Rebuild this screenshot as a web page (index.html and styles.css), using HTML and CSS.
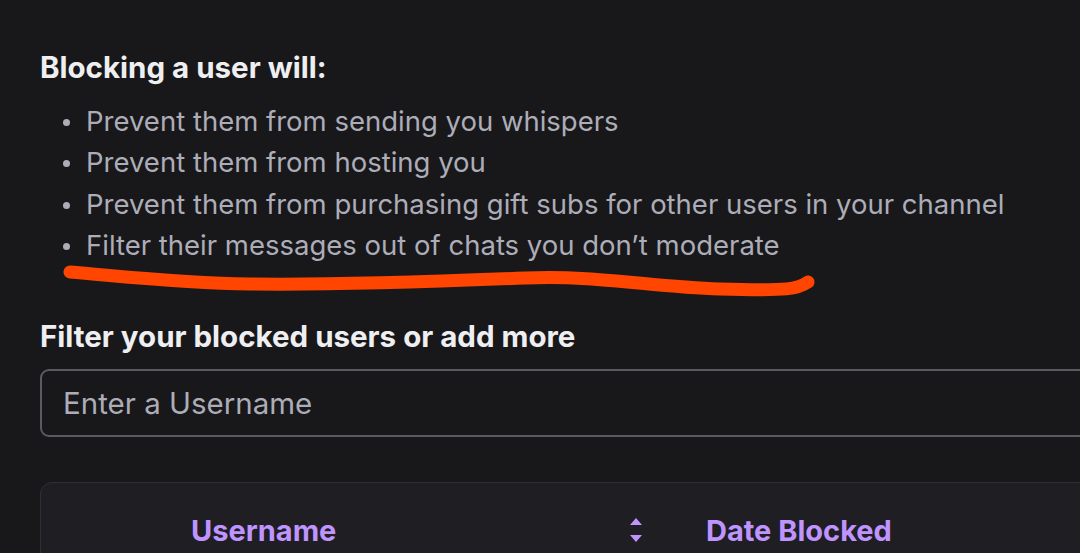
FILE: index.html
```html
<!DOCTYPE html>
<html lang="en">
<head>
<meta charset="utf-8">
<link rel="stylesheet" href="styles.css">
</head>
<body>
<main class="page">
  <h2 class="title">Blocking a user will:</h2>
  <ul class="effects">
    <li>Prevent them from sending you whispers</li>
    <li>Prevent them from hosting you</li>
    <li>Prevent them from purchasing gift subs for other users in your channel</li>
    <li>Filter their messages out of chats you don’t moderate</li>
  </ul>
  <h2 class="title filter-title">Filter your blocked users or add more</h2>
  <div class="input-wrap">
    <input class="input" type="text" placeholder="Enter a Username">
  </div>
  <div class="table-card">
    <div class="table-head">
      <div class="col col-user">Username</div>
      <div class="sort">
        <svg width="16" height="30" viewBox="0 0 16 30"><path d="M2 10 L8 3 L14 10 Z M2 20 L8 27 L14 20 Z" fill="#bf94ff"/></svg>
      </div>
      <div class="col col-date">Date Blocked</div>
    </div>
  </div>
</main>
<svg class="scribble" width="1080" height="553" viewBox="0 0 1080 553">
  <path d="M70 272 C 120 276, 180 283, 250 284 S 450 281, 525 278 S 650 287, 720 289 S 798 289, 808 282" fill="none" stroke="#ff4500" stroke-width="13" stroke-linecap="round" stroke-linejoin="round"/>
</svg>
</body>
</html>
```
FILE: styles.css
```css
html, body {
  margin: 0;
  padding: 0;
  background: #18181b;
  overflow: hidden;
  width: 1080px;
  height: 553px;
}
body {
  font-family: Inter, "Liberation Sans", sans-serif;
  color: #efeff1;
  position: relative;
}
.page {
  padding: 47px 0 0 40px;
}
.title {
  margin: 0;
  font-size: 29.5px;
  font-weight: 700;
  line-height: 40px;
  color: #efeff1;
}
.effects {
  margin: 14px 0 0 0;
  padding: 0 0 0 46px;
  list-style: none;
}
.effects li {
  position: relative;
  font-size: 27.5px;
  line-height: 41.3px;
  color: #adadb8;
}
.effects li::before {
  content: "";
  position: absolute;
  left: -23px;
  top: 18px;
  width: 7px;
  height: 7px;
  border-radius: 50%;
  background: #adadb8;
}
.filter-title {
  margin-top: 50px;
}
.input-wrap {
  margin-top: 13px;
}
.input {
  box-sizing: border-box;
  width: 1080px;
  height: 68px;
  background: #18181b;
  border: 2px solid #5a5a61;
  border-radius: 9px;
  padding: 0 21px;
  font-family: Inter, "Liberation Sans", sans-serif;
  font-size: 29.5px;
  color: #efeff1;
  outline: none;
}
.input::placeholder {
  color: #adadb8;
}
.table-card {
  margin-top: 45px;
  width: 1100px;
  height: 120px;
  background: #1f1f23;
  border: 1px solid #2f2f35;
  border-radius: 12px;
}
.table-head {
  display: flex;
  align-items: center;
  height: 94px;
  color: #bf94ff;
  font-weight: 700;
  font-size: 29px;
}
.col-user {
  margin-left: 150px;
  width: 437px;
}
.sort {
  width: 78px;
  display: flex;
  align-items: center;
}
.scribble {
  position: absolute;
  left: 0;
  top: 0;
  pointer-events: none;
}
```
